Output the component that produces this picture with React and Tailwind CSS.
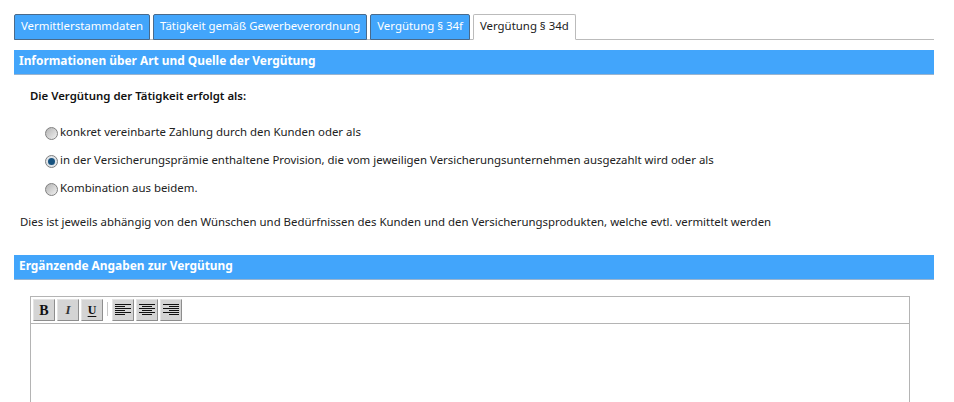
import React from 'react';

const Tab = ({ label, active }) => (
    <div
        className={
            active
                ? 'h-[26px] -mb-px px-[6px] pb-[2px] flex items-center bg-white text-[#222] border border-[#bbb] border-b-white rounded-t-[2px]'
                : 'h-[26px] -mb-px px-[6px] pb-[2px] flex items-center bg-[#42a5fb] text-white border border-[#4a6a8a] rounded-t-[2px]'
        }
    >
        {label}
    </div>
);

const SectionBar = ({ title }) => (
    <div className="h-[25px] pl-[5px] pb-[3px] flex items-center bg-[#42a5fb] border-b border-[#9ab4cf] text-white font-bold text-[11.9px]">
        {title}
    </div>
);

const Radio = ({ label, checked }) => (
    <label className="flex items-center h-[16px]">
        <span
            className={
                'w-[13px] h-[13px] mt-[2px] rounded-full border border-[#808080] mr-[2px] flex items-center justify-center ' +
                (checked ? 'bg-[#dfe4e9]' : 'bg-gradient-to-br from-[#b4b4b4] to-[#f2f2f2]')
            }
        >
            {checked && <span className="w-[7px] h-[7px] rounded-full bg-[#17527f]" />}
        </span>
        {label}
    </label>
);

const ToolBtn = ({ children }) => (
    <div className="w-[22px] h-[22px] flex items-center justify-center bg-[#d4d4d4] border-r border-b border-[#8e8e8e] border-t border-l border-t-[#e4e4e4] border-l-[#e4e4e4]">
        {children}
    </div>
);

const AlignIcon = ({ rows }) => (
    <svg width="16" height="14" viewBox="0 0 16 14" fill="#111">
        {rows.map(([x, w], i) => (
            <rect key={i} x={x} y={i * 2 + 1} width={w} height="1" />
        ))}
    </svg>
);

const App = () => {
    return (
        <div className="w-[954px] h-[402px] overflow-hidden bg-white text-[#222] text-[11.42px] font-['Noto_Sans',sans-serif]">
            <div className="pt-[14px] pl-[14px] pr-[20px]">
                <div className="flex gap-[3px] h-[26px] border-b border-[#bbb]">
                    <Tab label="Vermittlerstammdaten" />
                    <Tab label="Tätigkeit gemäß Gewerbeverordnung" />
                    <Tab label="Vergütung § 34f" />
                    <Tab label="Vergütung § 34d" active />
                </div>

                <div className="mt-[10px]">
                    <SectionBar title="Informationen über Art und Quelle der Vergütung" />
                </div>

                <div className="pl-[16px] pt-[13px] font-semibold text-[#111] leading-[16px]">
                    Die Vergütung der Tätigkeit erfolgt als:
                </div>

                <div className="pl-[31px] pt-[20px] flex flex-col gap-[12px]">
                    <Radio label="konkret vereinbarte Zahlung durch den Kunden oder als" />
                    <Radio label="in der Versicherungsprämie enthaltene Provision, die vom jeweiligen Versicherungsunternehmen ausgezahlt wird oder als" checked />
                    <Radio label="Kombination aus beidem." />
                </div>

                <div className="pl-[6px] pt-[18px] leading-[16px]">
                    Dies ist jeweils abhängig von den Wünschen und Bedürfnissen des Kunden und den Versicherungsprodukten, welche evtl. vermittelt werden
                </div>

                <div className="mt-[25px]">
                    <SectionBar title="Ergänzende Angaben zur Vergütung" />
                </div>

                <div className="mt-[16px] ml-[16px] mr-[24px] h-[120px] border border-[#b4b4b4]">
                    <div className="h-[27px] border-b border-[#b4b4b4] pl-[2px] pt-[2px] flex gap-[2px]">
                        <ToolBtn><span className="font-['Liberation_Serif',serif] font-bold text-[14px] text-[#111]">B</span></ToolBtn>
                        <ToolBtn><span className="font-['Liberation_Serif',serif] font-bold italic text-[13px] text-[#333]">I</span></ToolBtn>
                        <ToolBtn><span className="font-['Liberation_Serif',serif] font-bold underline underline-offset-2 text-[12px] text-[#111]">U</span></ToolBtn>
                        <div className="w-px h-[14px] mt-[3px] mx-[2px] bg-[#c8c8c8]" />
                        <ToolBtn><AlignIcon rows={[[0, 16], [0, 10], [0, 16], [0, 10], [0, 16], [0, 10]]} /></ToolBtn>
                        <ToolBtn><AlignIcon rows={[[0, 16], [3, 10], [0, 16], [3, 10], [0, 16], [3, 10]]} /></ToolBtn>
                        <ToolBtn><AlignIcon rows={[[0, 16], [6, 10], [0, 16], [6, 10], [0, 16], [6, 10]]} /></ToolBtn>
                    </div>
                </div>
            </div>
        </div>
    );
};

export default App;
